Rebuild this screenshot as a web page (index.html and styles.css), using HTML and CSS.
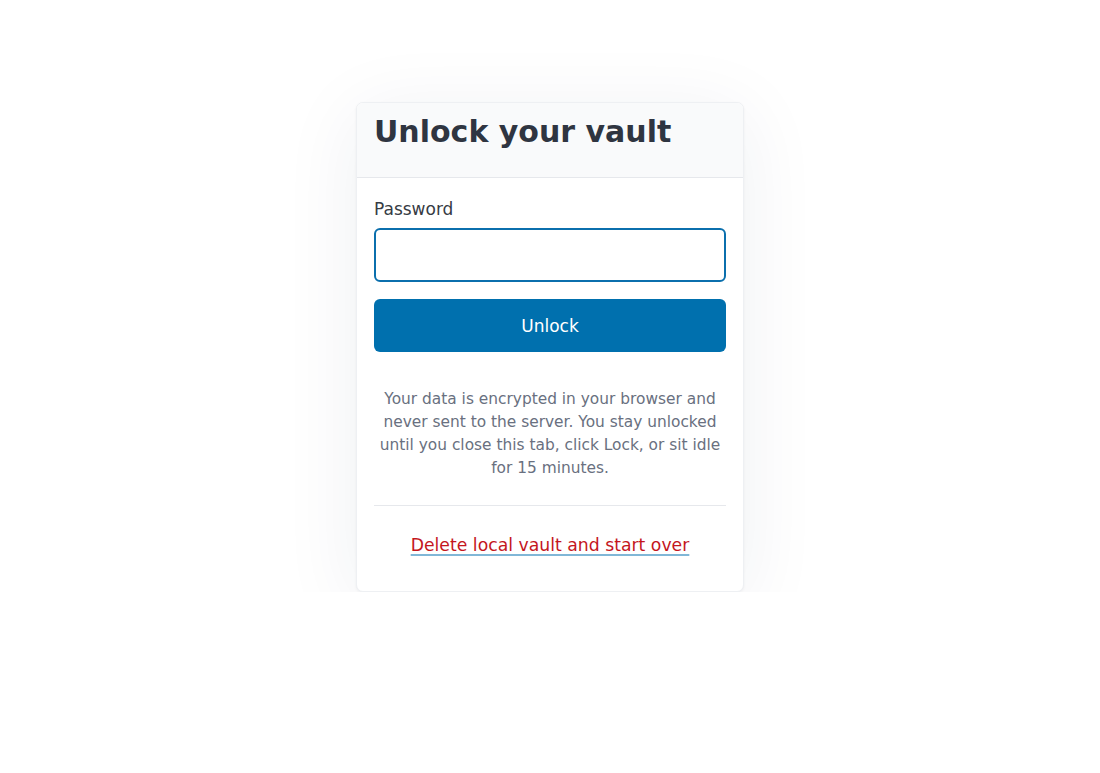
FILE: index.html
```html
<!DOCTYPE html>
<html lang="en">
<head>
<meta charset="utf-8">
<title>Unlock your vault</title>
<link rel="stylesheet" href="styles.css">
</head>
<body>
<main class="page">
  <section class="card">
    <header class="card-header">
      <h1 class="title">Unlock your vault</h1>
    </header>
    <div class="card-body">
      <form class="form">
        <label class="label" for="pw">Password</label>
        <input class="input" id="pw" type="password">
        <button class="btn" type="button">Unlock</button>
      </form>
      <p class="note">Your data is encrypted in your browser and never sent to the server. You stay unlocked until you close this tab, click Lock, or sit idle for 15 minutes.</p>
      <hr class="divider">
      <div class="reset-row">
        <a class="reset-link" href="#">Delete local vault and start over</a>
      </div>
    </div>
  </section>
</main>
</body>
</html>
```

FILE: styles.css
```css
* { box-sizing: border-box; }

html, body {
  margin: 0;
  padding: 0;
  background: #ffffff;
  font-family: "DejaVu Sans", "Noto Sans", sans-serif;
}

.page {
  display: flex;
  justify-content: center;
  padding-top: 102px;
}

.card {
  width: 388px;
  background: #ffffff;
  border: 1px solid #eef0f3;
  border-radius: 7px;
  overflow: hidden;
  box-shadow: 0 12px 80px rgba(30, 41, 80, 0.07), 0 1px 3px rgba(15, 23, 42, 0.05);
}

.card-header {
  background: #f9fafb;
  border-bottom: 1px solid #e6e8ec;
  padding: 11px 17px 0;
}

.title {
  margin: 0 0 27px;
  font-size: 30px;
  line-height: 36px;
  font-weight: bold;
  color: #2f3541;
}

.card-body {
  padding: 18px 17px 32px;
}

.form {
  display: flex;
  flex-direction: column;
}

.label {
  font-size: 17px;
  line-height: 26px;
  color: #363b44;
  margin-bottom: 6px;
}

.input {
  height: 54px;
  border: 2px solid #0b6fad;
  border-radius: 6px;
  background: #ffffff;
  font: inherit;
  padding: 0 12px;
  outline: none;
}

.btn {
  margin-top: 17px;
  height: 53px;
  border: none;
  border-radius: 6px;
  background: #0070ae;
  color: #ffffff;
  font-family: "DejaVu Sans", sans-serif;
  font-size: 17px;
}

.note {
  margin: 36px 0 25px;
  text-align: center;
  font-size: 15.4px;
  line-height: 23px;
  color: #697080;
}

.divider {
  margin: 0;
  border: none;
  border-top: 1px solid #e6e8ec;
}

.reset-row {
  margin-top: 27px;
  text-align: center;
  font-size: 17.25px;
  line-height: 25.5px;
}

.reset-link {
  color: #c4161d;
  text-decoration: underline;
  text-decoration-color: #80b7d7;
  text-decoration-thickness: 2px;
  text-underline-offset: 3px;
}
```
